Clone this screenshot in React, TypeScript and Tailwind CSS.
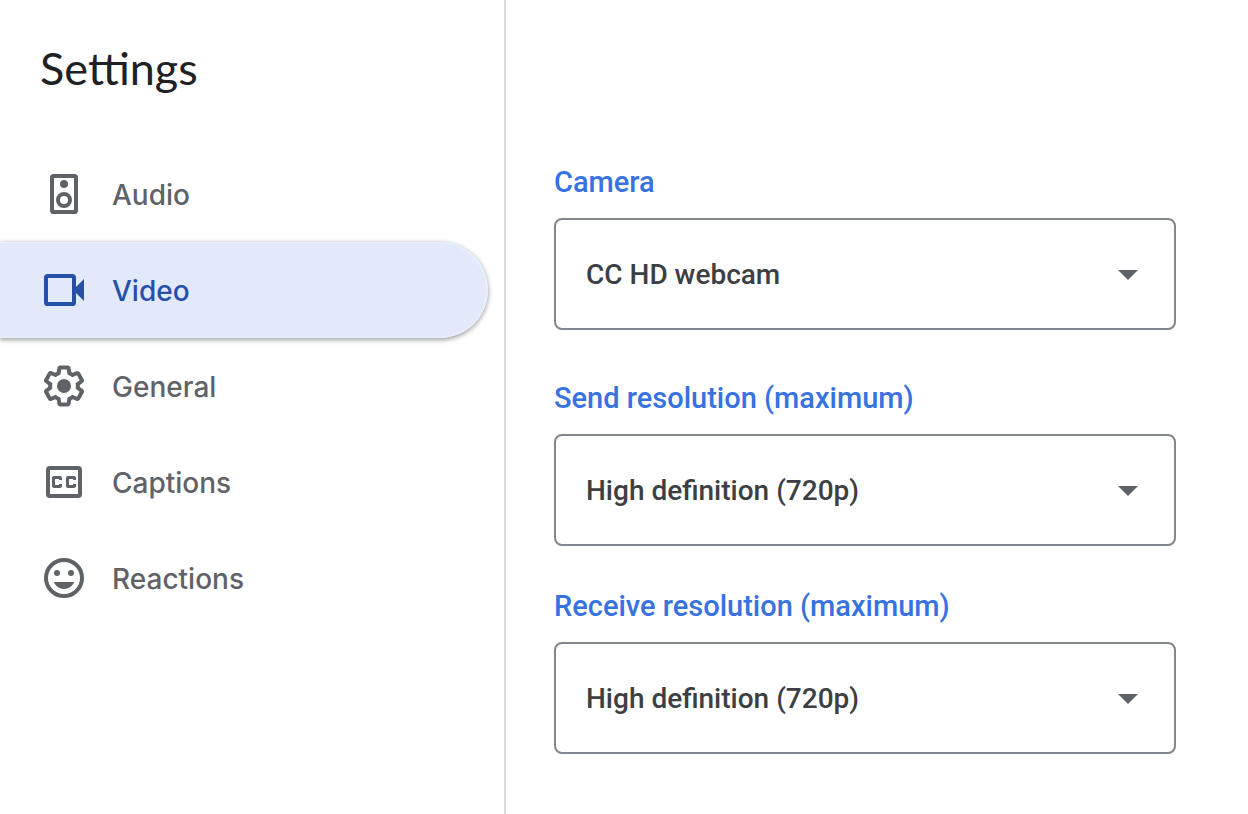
import React from 'react';

const GEAR =
  'M13.85 22.25h-3.7c-.74 0-1.36-.54-1.45-1.27l-.27-1.89c-.27-.14-.53-.29-.79-.46l-1.8.72c-.7.26-1.47-.03-1.81-.65L2.2 15.53c-.35-.66-.2-1.44.36-1.88l1.53-1.19c-.01-.15-.02-.3-.02-.46 0-.15.01-.31.02-.46l-1.52-1.19c-.59-.45-.74-1.26-.37-1.88l1.85-3.19c.34-.62 1.11-.9 1.79-.63l1.81.73c.26-.17.52-.32.78-.46l.27-1.91c.09-.7.71-1.25 1.44-1.25h3.7c.74 0 1.36.54 1.45 1.27l.27 1.89c.27.14.53.29.79.46l1.8-.72c.71-.26 1.48.03 1.82.65l1.84 3.18c.36.66.2 1.44-.36 1.88l-1.52 1.19c.01.15.02.3.02.46s-.01.31-.02.46l1.52 1.19c.56.45.72 1.23.37 1.86l-1.86 3.22c-.34.62-1.11.9-1.8.63l-1.8-.72c-.26.17-.52.32-.78.46l-.27 1.91c-.1.68-.72 1.22-1.46 1.22zm-3.23-2h2.76l.37-2.55.53-.22c.44-.18.88-.44 1.34-.78l.45-.34 2.38.96 1.38-2.4-2.03-1.58.07-.56c.03-.26.06-.51.06-.78s-.03-.53-.06-.78l-.07-.56 2.03-1.58-1.39-2.4-2.39.96-.45-.35c-.42-.32-.87-.58-1.33-.77l-.52-.22-.37-2.55h-2.76l-.37 2.55-.53.21c-.44.19-.88.44-1.34.79l-.45.33-2.38-.95-1.39 2.39 2.03 1.58-.07.56a7 7 0 0 0-.06.79c0 .26.02.53.06.78l.07.56-2.03 1.58 1.38 2.4 2.39-.96.45.35c.43.33.86.58 1.33.77l.53.22.38 2.55z';

const tabs = [
  {
    name: 'Audio',
    icon: (
      <>
        <rect x="6" y="3" width="12" height="18" rx="0.8" fill="none" stroke="currentColor" strokeWidth="2" />
        <circle cx="12" cy="7" r="2" />
        <circle cx="12" cy="15" r="3" fill="none" stroke="currentColor" strokeWidth="2" />
      </>
    ),
  },
  {
    name: 'Video',
    icon: (
      <>
        <rect x="3" y="5" width="14" height="14" rx="0.8" fill="none" stroke="currentColor" strokeWidth="2" />
        <path d="M22 6.5l-4 4v3l4 4z" />
      </>
    ),
  },
  {
    name: 'General',
    icon: (
      <>
        <path d={GEAR} />
        <circle cx="12" cy="12" r="3.5" />
      </>
    ),
  },
  {
    name: 'Captions',
    icon: (
      <>
        <rect x="4" y="5" width="16" height="14" rx="0.9" fill="none" stroke="currentColor" strokeWidth="2" />
        <path d="M7 15h3c.55 0 1-.45 1-1v-1H9.5v.5h-2v-3h2v.5H11v-1c0-.55-.45-1-1-1H7c-.55 0-1 .45-1 1v4c0 .55.45 1 1 1zm7 0h3c.55 0 1-.45 1-1v-1h-1.5v.5h-2v-3h2v.5H18v-1c0-.55-.45-1-1-1h-3c-.55 0-1 .45-1 1v4c0 .55.45 1 1 1z" />
      </>
    ),
  },
  {
    name: 'Reactions',
    icon: (
      <>
        <circle cx="12" cy="12" r="9" fill="none" stroke="currentColor" strokeWidth="2" />
        <circle cx="8.5" cy="9.5" r="1.5" />
        <circle cx="15.5" cy="9.5" r="1.5" />
        <path d="M12 17.5c2.33 0 4.31-1.46 5.11-3.5H6.89c.8 2.04 2.78 3.5 5.11 3.5z" />
      </>
    ),
  },
];

const resolutions = ['High definition (720p)', 'Standard definition (360p)'];

function SelectField({ id, label, options, className = '' }: any) {
  return (
    <div className={className}>
      <label htmlFor={id} className="block text-[29px] leading-10 font-medium text-[#3871e0]">
        {label}
      </label>
      <div className="relative mt-4">
        <select
          id={id}
          className="block h-28 w-full appearance-none rounded-lg border-2 border-[#80868b] bg-white pt-[2px] pl-[30px] pr-20 text-[28px] font-medium text-[#3c4043] focus:outline-none focus:border-[#3871e0]"
        >
          {options.map((o: string) => (
            <option key={o}>{o}</option>
          ))}
        </select>
        <svg
          viewBox="0 0 24 24"
          fill="currentColor"
          className="pointer-events-none absolute right-6 top-8 size-12 text-[#5f6368]"
          aria-hidden="true"
        >
          <path d="M7 10l5 5 5-5z" />
        </svg>
      </div>
    </div>
  );
}

export default function App() {
  const [active, setActive] = React.useState('Video');

  return (
    <div className="flex min-h-screen w-full bg-white font-['Roboto',sans-serif]">
      {/* Sidebar */}
      <aside className="w-[506px] shrink-0 border-r-2 border-[#dadce0] pr-4">
        <h1 className="pt-[38px] pb-12 pl-10 font-['Lato',sans-serif] text-[45px] leading-[60px] text-[#202124]">
          Settings
        </h1>
        <nav className="font-['Inter',sans-serif]">
          {tabs.map((tab) => (
            <button
              key={tab.name}
              onClick={() => setActive(tab.name)}
              className={`flex h-24 w-full items-center gap-6 rounded-r-full pl-10 text-[28px] font-medium ${
                active === tab.name
                  ? 'bg-[#e2e9fb] text-[#264fa7] shadow-[inset_-1px_0_0_1px_#e8f0fe,0_2px_5px_rgba(60,64,67,0.45),0_0_4px_rgba(60,64,67,0.15)]'
                  : 'text-[#5f6368]'
              }`}
            >
              <svg viewBox="0 0 24 24" fill="currentColor" className="size-12" aria-hidden="true">
                {tab.icon}
              </svg>
              <span className="pt-[2px]">{tab.name}</span>
            </button>
          ))}
        </nav>
      </aside>

      {/* Video settings */}
      <main className="min-w-0 flex-1 pt-[162px] pb-[60px] pl-12 pr-[72px]">
        <SelectField id="camera" label="Camera" options={['CC HD webcam']} />
        <SelectField id="send" label="Send resolution (maximum)" options={resolutions} className="mt-12" />
        <SelectField id="receive" label="Receive resolution (maximum)" options={resolutions} className="mt-10" />
      </main>
    </div>
  );
}
